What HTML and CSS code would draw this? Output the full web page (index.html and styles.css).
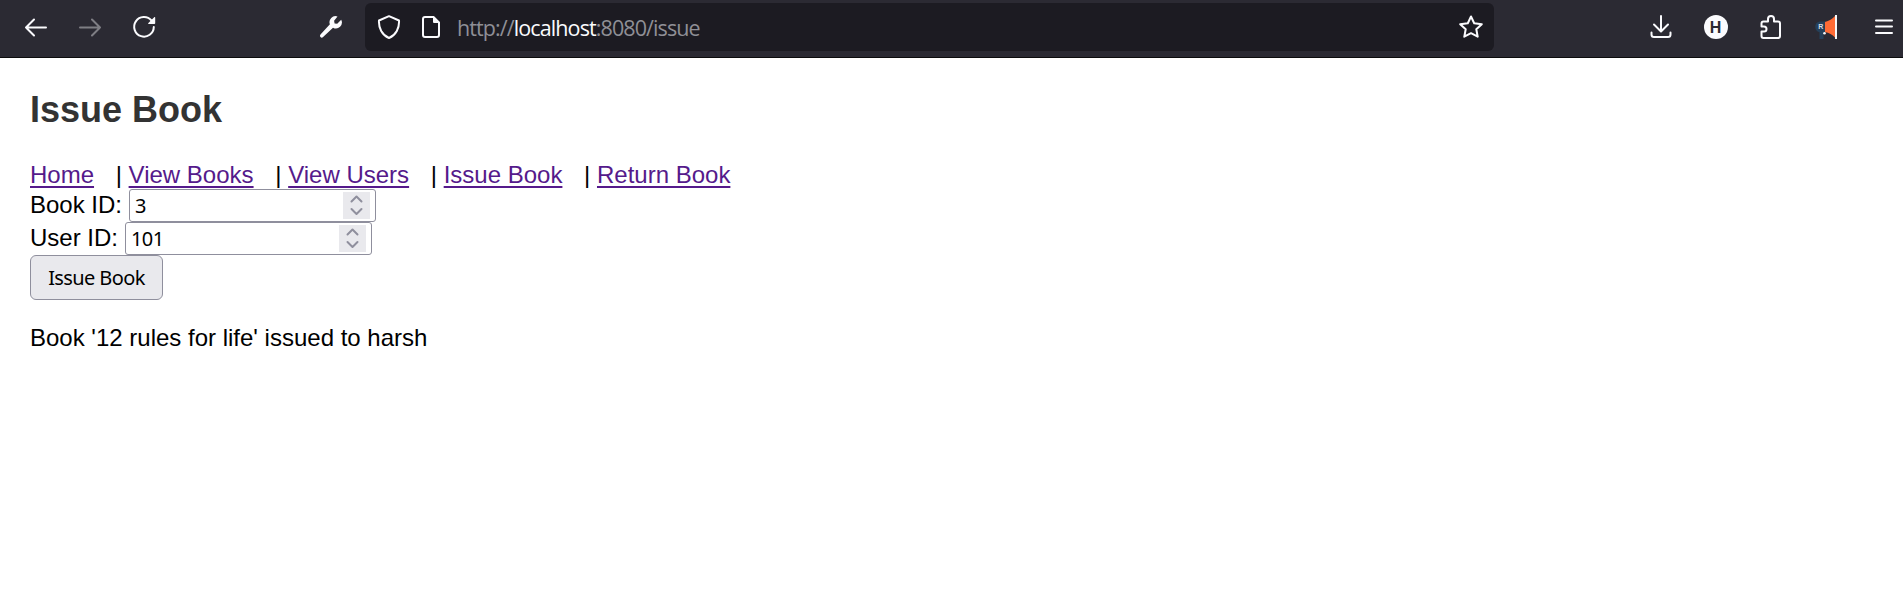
FILE: index.html
```html
<!DOCTYPE html>
<html lang="en">
<head>
<meta charset="utf-8">
<title>Issue Book</title>
<link rel="stylesheet" href="styles.css">
</head>
<body>
<header class="toolbar">
  <span class="tool"><svg class="icon" viewBox="0 0 24 24"><path d="M22 12.500H2M10 4.500l-8 8 8 8"/></svg></span>
  <span class="tool disabled"><svg class="icon" viewBox="0 0 24 24"><path d="M2 12.500h20M14 4.500l8 8-8 8"/></svg></span>
  <span class="tool"><svg class="icon" viewBox="0 0 24 24"><path d="M19.500 5.500A9.800 9.800 0 1 0 21.800 12"/><path class="solid" d="M22.200 2.200c.4-.4 1-.2 1 .4v5.600q0 .8-.8.8h-5.600c-.6 0-.8-.6-.4-1z"/></svg></span>
  <span class="tool wrench"><svg class="icon" viewBox="0 0 24 24"><path class="solid" d="M18.500 1.500a6 6 0 0 0-7.600 7.800L1.500 19.500c-1.600 1.900.8 4.300 2.600 2.600L14 12.700a6 6 0 0 0 8.200-8l-4 4.100-2.600-.4-.5-2.700z"/></svg></span>
  <div class="urlbar">
    <svg class="icon shield" viewBox="0 0 24 24"><path d="M12 1.200L22 5.500C22.500 13 19 20 12 23 5 20 1.500 13 2 5.500z"/></svg>
    <svg class="icon page" viewBox="0 0 24 24"><path d="M14.500 2H6Q4 2 4 4v16q0 2 2 2h12q2 0 2-2V7.500z"/><path class="solid" d="M14 1l7 7h-6q-1 0-1-1z"/></svg>
    <div class="url">http://<span class="host">localhost</span>:8080/issue</div>
    <svg class="icon star" viewBox="0 0 24 24"><path d="M12 1.500l3.200 6.700 7.600 1-5.500 5 1.400 7.500L12 18.200l-6.700 3.500 1.400-7.500-5.500-5 7.600-1z"/></svg>
  </div>
  <div class="extensions">
    <span class="ext"><svg class="icon" viewBox="0 0 24 24"><path d="M12 1v15M5 9.500l7 7 7-7M2.500 17.500v2q0 2.500 2.500 2.500h14q2.500 0 2.500-2.500v-2"/></svg></span>
    <span class="ext"><span class="avatar">H</span></span>
    <span class="ext"><svg class="icon" viewBox="0 0 24 24"><path d="M2.500 11.500V8.500q0-2 2-2h4.500V4a3 3 0 0 1 6 0v2.500h4q2 0 2 2V21q0 2-2 2H4.500q-2 0-2-2v-4.500H5a2.500 2.500 0 0 0 0-5z"/></svg></span>
    <span class="ext"><svg class="icon" viewBox="0 0 24 24"><path class="horn-body" d="M5.500 6.500H12v11H9.500V24h-4v-6.800a5.500 5.500 0 0 1 0-10.700z"/><path class="horn-cone" d="M11 7q6-1.500 10-6v21.500q-4-4.500-10-5.500z"/><path class="horn-rim" d="M21 0h2v24h-2z"/><circle class="horn-rim" cx="10.500" cy="18.300" r="1.300"/><text class="horn-letter" x="4.200" y="14.300">R</text></svg></span>
    <span class="ext menu"><svg class="icon" viewBox="0 0 24 24"><path d="M4 5.500h16M4 11.500h16M4 18h16"/></svg></span>
  </div>
</header>
<main class="content">
  <h2 class="title">Issue Book</h2>
  <nav class="links"><a href="#">Home</a> | <a href="#">View Books</a> | <a href="#">View Users</a> | <a href="#">Issue Book</a> | <a href="#">Return Book</a></nav>
  <form class="form">
    <div class="row"><label>Book ID:</label>
      <div class="field"><span>3</span><span class="spinner"><svg viewBox="0 0 27 27"><path d="M8.500 9.500l5-5 5 5M8.500 17l5 5 5-5"/></svg></span></div></div>
    <div class="row"><label>User ID:</label>
      <div class="field"><span>101</span><span class="spinner"><svg viewBox="0 0 27 27"><path d="M8.500 9.500l5-5 5 5M8.500 17l5 5 5-5"/></svg></span></div></div>
    <button class="submit" type="button">Issue Book</button>
  </form>
  <p class="message">Book '12 rules for life' issued to harsh</p>
</main>
</body>
</html>
```

FILE: styles.css
```css
* { box-sizing: border-box; }
body { margin: 0; background: #fff; color: #000; font: 24px/31px "Liberation Sans", Arial, sans-serif; }
.toolbar { display: flex; height: 58px; padding: 3px 0 6px 9px; background: #2b2a33; border-bottom: 1px solid #0c0c0d; }
.tool, .ext { display: flex; align-items: center; justify-content: center; flex: none; }
.tool { width: 54px; height: 48px; }
.ext { width: 55px; height: 48px; }
.wrench { margin-left: 133px; }
.disabled { opacity: .4; }
.icon { width: 24px; height: 24px; flex: none; fill: none; stroke: #fbfbfe; stroke-width: 2; stroke-linecap: round; stroke-linejoin: round; }
.icon .solid { fill: #fbfbfe; stroke: none; }
.urlbar { display: flex; align-items: center; width: 1129px; height: 48px; margin-left: 7px; padding: 0 11px 0 12px; border-radius: 6px; background: #1c1b22; }
.page { margin-left: 18px; }
.url { flex: 1; margin-left: 14px; padding-top: 1px; font: 21.5px/30px "Open Sans", "Noto Sans", sans-serif; letter-spacing: -.9px; color: #8f8f96; white-space: nowrap; }
.host { color: #fbfbfe; }
.extensions { display: flex; margin-left: 139px; }
.menu { width: 38px; margin-left: 12px; }
.avatar { width: 24px; height: 24px; border-radius: 50%; background: #fbfbfe; color: #2b2a33; font: bold 16px/25px "Liberation Sans", Arial, sans-serif; text-align: center; }
.icon .horn-body { fill: #25405a; stroke: none; }
.icon .horn-cone { fill: #ff6b35; stroke: none; }
.icon .horn-rim { fill: #f4f7fa; stroke: none; }
.icon .horn-letter { fill: #d5dde5; stroke: none; font: bold 7px "Liberation Sans", Arial, sans-serif; }
.content { padding: 31px 30px 0; }
.title { margin: 0 0 29px; color: #333; font-size: 36px; line-height: 42px; }
.links { height: 29px; line-height: 29px; white-space: nowrap; }
.links a { margin-right: 15px; color: #551a8b; text-decoration-thickness: 2px; text-underline-offset: 3px; text-decoration-skip-ink: none; }
.row { display: flex; gap: 7px; height: 33px; }
.field { display: flex; justify-content: space-between; align-items: center; width: 247px; height: 33px; padding: 0 5px; border: 1px solid #8f8f9d; border-radius: 3px; font: 20px/27px "Noto Sans", sans-serif; letter-spacing: -.6px; }
.spinner { width: 27px; height: 27px; background: #e9e9ed; }
.spinner svg { display: block; width: 27px; height: 27px; fill: none; stroke: #8f8f9d; stroke-width: 2; stroke-linecap: round; stroke-linejoin: round; }
.submit { display: block; width: 133px; height: 45px; padding: 0 0 1px; border: 1px solid #8f8f9d; border-radius: 6px; background: #e9e9ed; color: #000; font: 20px/27px "Noto Sans", sans-serif; letter-spacing: -.6px; }
.message { margin: 22px 0 0; }
```
